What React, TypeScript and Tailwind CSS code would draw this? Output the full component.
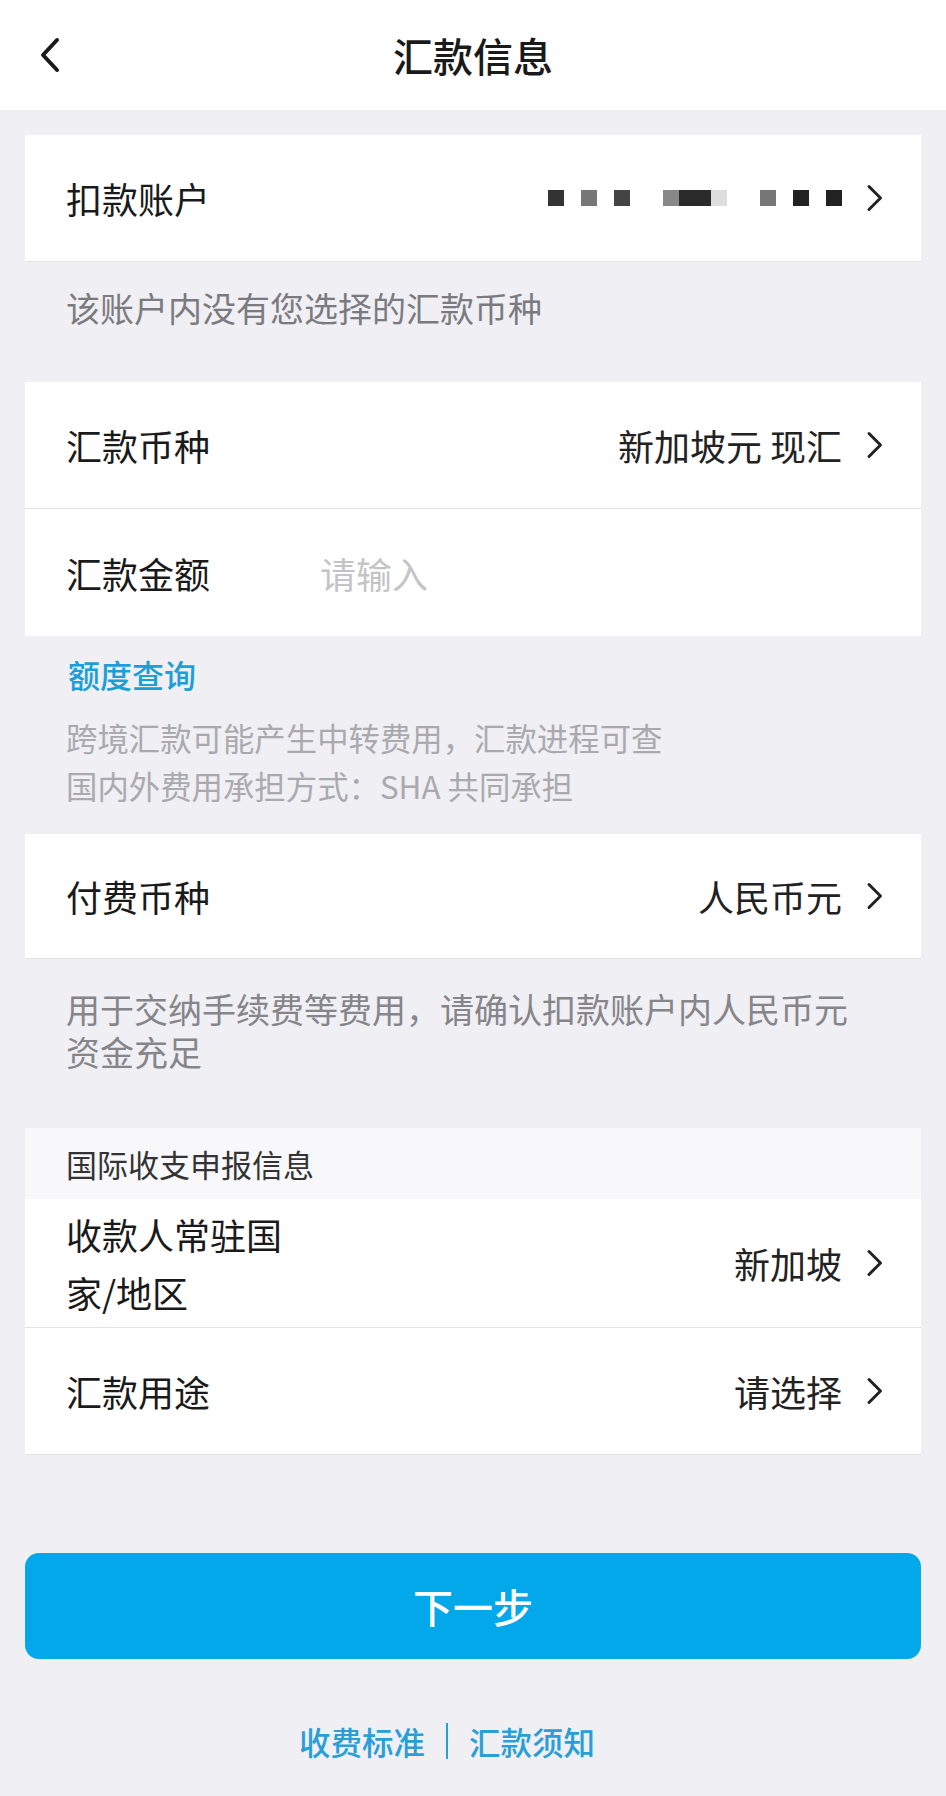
import React from 'react';

const FONT = { fontFamily: '"Noto Sans CJK SC", "Noto Sans", sans-serif' };

function Chevron() {
  return (
    <svg width="18" height="28" viewBox="0 0 18 28" fill="none" className="shrink-0">
      <path d="M3 2.5 L14.5 14 L3 25.5" stroke="#222" strokeWidth="3" strokeLinecap="round" strokeLinejoin="round" />
    </svg>
  );
}

function MaskedAccount() {
  const cells = ['#333', null, '#777', null, '#444', 'gap', '#888', '#2a2a2a', '#2a2a2a', '#ddd', 'gap', '#777', null, '#222', null, '#222'];
  return (
    <div className="flex items-center">
      {cells.map((c, i) =>
        c === null ? (
          <div key={i} className="w-[17px] h-[16px]" />
        ) : c === 'gap' ? (
          <div key={i} className="w-[33px] h-[16px]" />
        ) : (
          <div key={i} className="w-[16px] h-[16px]" style={{ backgroundColor: c }} />
        )
      )}
    </div>
  );
}

function Row({ label, value, border, children, h = 'h-[126px]' }: { label: React.ReactNode; value?: React.ReactNode; border?: boolean; children?: React.ReactNode; h?: string }) {
  return (
    <div className={`flex items-center pl-[41px] pr-[37px] ${h} ${border ? 'border-b border-[#e3e3e7]' : ''}`}>
      <div className="text-[36px] leading-[58px] text-[#1a1a1a] w-[254px] shrink-0">{label}</div>
      {children}
      {value !== undefined && (
        <div className="ml-auto flex items-center gap-[24px]">
          <div className="text-[36px] leading-[44px] text-[#222]">{value}</div>
          <Chevron />
        </div>
      )}
    </div>
  );
}

export default function App() {
  return (
    <div className="min-h-[1796px] bg-[#efeff4] flex flex-col" style={FONT}>
      <header className="h-[110px] bg-white relative flex items-center justify-center">
        <svg width="22" height="36" viewBox="0 0 22 36" fill="none" className="absolute left-[39px] top-[37px]">
          <path d="M18 3 L4 18 L18 33" stroke="#1a1a1a" strokeWidth="4" strokeLinecap="round" strokeLinejoin="round" />
        </svg>
        <h1 className="text-[40px] leading-[48px] font-medium text-[#1a1a1a]">汇款信息</h1>
      </header>

      <div className="mx-[25px] mt-[25px] bg-white border-b border-[#e3e3e7]">
        <Row label="扣款账户" value={<MaskedAccount />} />
      </div>
      <p className="pl-[66px] pt-[24px] pb-[52px] text-[34px] leading-[44px] text-[#7b7b7f]">该账户内没有您选择的汇款币种</p>

      <div className="mx-[25px] bg-white">
        <Row label="汇款币种" value="新加坡元 现汇" border h="h-[127px]" />
        <Row label="汇款金额" h="h-[127px]">
          <div className="text-[36px] leading-[44px] text-[#c4c4c6]">请输入</div>
        </Row>
      </div>

      <div className="pl-[68px] pt-[16px] text-[32px] leading-[44px] font-medium text-[#1c9fd9]">额度查询</div>
      <div className="pl-[66px] pt-[18px] pb-[24px] text-[31.4px] leading-[48px] text-[#aaaaae]">
        <p>跨境汇款可能产生中转费用，汇款进程可查</p>
        <p>国内外费用承担方式：SHA 共同承担</p>
      </div>

      <div className="mx-[25px] bg-white border-b border-[#e3e3e7]">
        <Row label="付费币种" value="人民币元" h="h-[124px]" />
      </div>
      <p className="pl-[66px] pr-[90px] pt-[28px] pb-[55px] text-[34px] leading-[43px] text-[#85858a]">
        用于交纳手续费等费用，请确认扣款账户内人民币元资金充足
      </p>

      <div className="mx-[25px] bg-white border-b border-[#e3e3e7]">
        <div className="h-[71px] bg-[#f8f8fa] flex items-center pl-[41px] text-[31px] leading-[40px] text-[#333]">国际收支申报信息</div>
        <Row label={<>收款人常驻国<br />家/地区</>} value="新加坡" border h="h-[129px]" />
        <Row label="汇款用途" value="请选择" h="h-[126px]" />
      </div>

      <button className="mx-[25px] mt-[98px] h-[106px] rounded-[14px] bg-[#03a8ea] text-white text-[40px] leading-[48px] font-medium">下一步</button>

      <div className="mt-[60px] pr-[52px] flex items-center justify-center text-[31.5px] leading-[44px] font-medium text-[#2a9fd6]">
        <span>收费标准</span>
        <span className="mx-[21px] w-[2px] h-[36px] bg-[#2a9fd6]" />
        <span>汇款须知</span>
      </div>
    </div>
  );
}
